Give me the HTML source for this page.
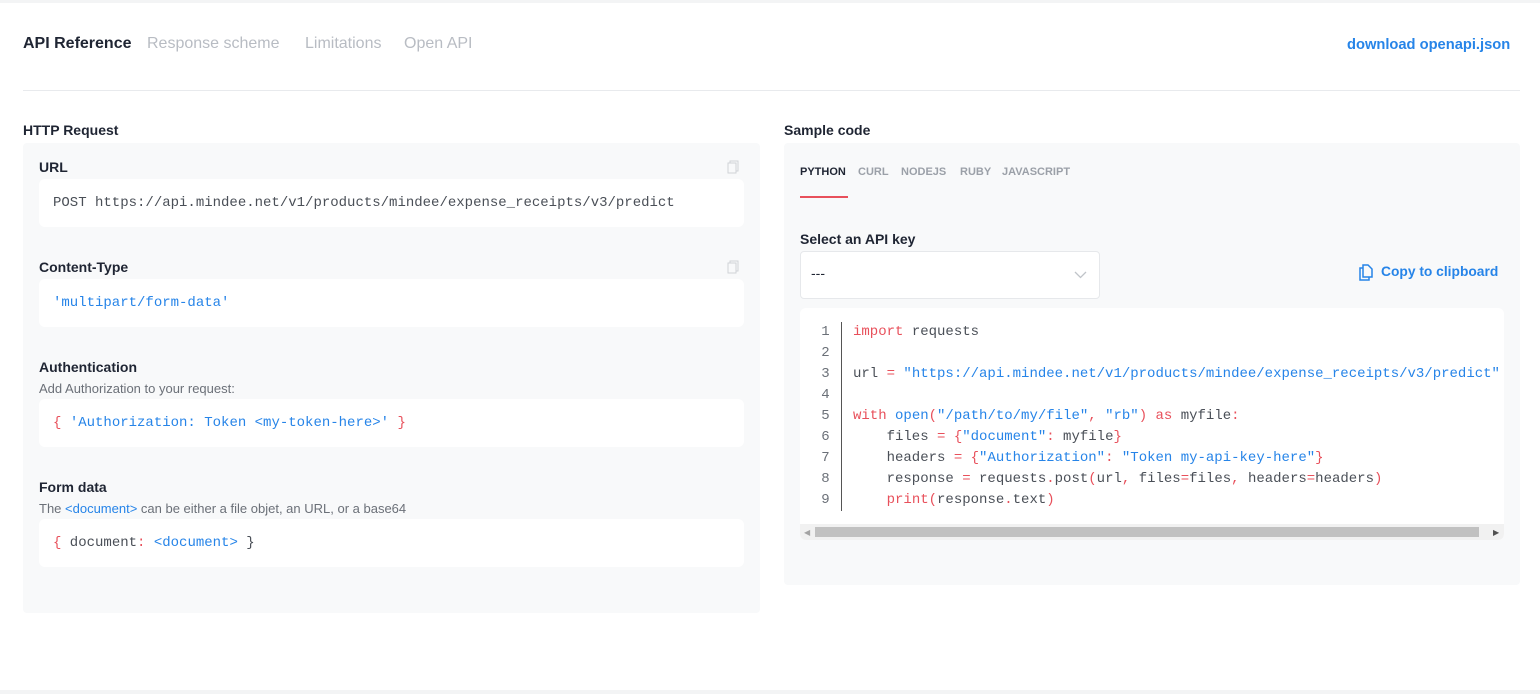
<!DOCTYPE html>
<html><head><meta charset="utf-8"><style>
*{box-sizing:border-box;margin:0;padding:0}
body{width:1540px;height:694px;background:#fff;font-family:"Liberation Sans",sans-serif;position:relative;overflow:hidden;color:#1f2533}
.topbar{position:absolute;left:0;top:0;width:1540px;height:3px;background:#f3f4f5}
.botbar{position:absolute;left:0;bottom:0;width:1540px;height:4px;background:#f3f4f5}
.a{position:absolute;white-space:nowrap}
.nav{top:35px;font-size:16px;color:#b8bcc3}
.hr{position:absolute;left:23px;top:90px;width:1497px;height:1px;background:#e8eaed}
.panel{position:absolute;background:#f8f9fa;border-radius:4px}
.h{font-size:14px;font-weight:bold;color:#1f2533}
.box{position:absolute;background:#fff;border-radius:6px;left:39px;width:705px;height:48px;font-family:"Liberation Mono",monospace;font-size:14px;padding:16px 14px;color:#4a4f57}
.sub{font-size:13px;color:#6b7078}
.b{color:#2684e8}.r{color:#e8505b}.g{color:#4a4f57}
.code{position:absolute;left:800px;top:308px;width:704px;height:232px;background:#fff;border-radius:6px;overflow:hidden}
.ln{position:absolute;left:0;top:14px;width:42px;padding-left:10px;text-align:center;font-family:"Liberation Mono",monospace;font-size:14px;line-height:21px;color:#6b7078;border-right:1px solid #555}
.cl{position:absolute;left:53px;top:14px;font-family:"Liberation Mono",monospace;font-size:14px;line-height:21px;color:#4a4f57;white-space:pre}
.copy{position:absolute;width:12px;height:14px}
</style></head><body>
<div class="topbar"></div>
<div class="a nav" style="left:23px;color:#1f2533;font-weight:bold">API Reference</div>
<div class="a nav" style="left:147px">Response scheme</div>
<div class="a nav" style="left:305px">Limitations</div>
<div class="a nav" style="left:404px">Open API</div>
<div class="a" style="left:1347px;top:37px;font-size:14.7px;font-weight:bold;color:#2684e8">download openapi.json</div>
<div class="hr"></div>

<div class="a h" style="left:23px;top:122px">HTTP Request</div>
<div class="panel" style="left:23px;top:143px;width:737px;height:470px"></div>
<div class="a h" style="left:39px;top:159px">URL</div>
<svg class="copy" style="left:727px;top:160px" viewBox="0 0 12 14"><rect x="3" y="1" width="8" height="10" fill="none" stroke="#d0d3d7"/><rect x="1" y="3" width="8" height="10" fill="#f8f9fa" stroke="#d0d3d7"/></svg>
<div class="box" style="top:179px">POST https://api.mindee.net/v1/products/mindee/expense_receipts/v3/predict</div>
<div class="a h" style="left:39px;top:259px">Content-Type</div>
<svg class="copy" style="left:727px;top:260px" viewBox="0 0 12 14"><rect x="3" y="1" width="8" height="10" fill="none" stroke="#d0d3d7"/><rect x="1" y="3" width="8" height="10" fill="#f8f9fa" stroke="#d0d3d7"/></svg>
<div class="box b" style="top:279px">'multipart/form-data'</div>
<div class="a h" style="left:39px;top:359px">Authentication</div>
<div class="a sub" style="left:39px;top:381px">Add Authorization to your request:</div>
<div class="box" style="top:399px"><span class="r">{</span> <span class="b">'Authorization: Token &lt;my-token-here&gt;'</span> <span class="r">}</span></div>
<div class="a h" style="left:39px;top:479px">Form data</div>
<div class="a sub" style="left:39px;top:501px">The <span class="b">&lt;document&gt;</span> can be either a file objet, an URL, or a base64</div>
<div class="box" style="top:519px"><span class="r">{</span> document<span class="r">:</span> <span class="b">&lt;document&gt;</span> }</div>

<div class="a h" style="left:784px;top:122px">Sample code</div>
<div class="panel" style="left:784px;top:143px;width:736px;height:442px"></div>
<div class="a" style="left:800px;top:166px;font-size:11px;font-weight:bold;color:#1f2533">PYTHON</div>
<div class="a" style="left:858px;top:166px;font-size:11px;font-weight:bold;color:#9ba0a8">CURL</div>
<div class="a" style="left:901px;top:166px;font-size:11px;font-weight:bold;color:#9ba0a8">NODEJS</div>
<div class="a" style="left:960px;top:166px;font-size:11px;font-weight:bold;color:#9ba0a8">RUBY</div>
<div class="a" style="left:1002px;top:166px;font-size:11px;font-weight:bold;color:#9ba0a8">JAVASCRIPT</div>
<div class="a" style="left:800px;top:196px;width:48px;height:2px;background:#e8505b"></div>
<div class="a h" style="left:800px;top:231px">Select an API key</div>
<div class="a" style="left:800px;top:251px;width:300px;height:48px;background:#fff;border:1px solid #e6e8eb;border-radius:4px"></div>
<div class="a" style="left:811px;top:265px;font-size:14px;color:#1f2533">---</div>
<svg class="a" style="left:1074px;top:271px" width="13" height="8" viewBox="0 0 13 8"><path d="M1 1l5.5 5.5L12 1" fill="none" stroke="#c0c4c9" stroke-width="1.3"/></svg>
<svg class="a" style="left:1358px;top:264px" width="16" height="17" viewBox="0 0 16 17"><path d="M5 1h5l4 4v8H5z" fill="none" stroke="#2684e8" stroke-width="1.5"/><path d="M5 4H2v12h9v-3" fill="none" stroke="#2684e8" stroke-width="1.5"/></svg>
<div class="a" style="left:1381px;top:264px;font-size:13.8px;font-weight:bold;color:#2684e8">Copy to clipboard</div>

<div class="code">
<div class="ln">1<br>2<br>3<br>4<br>5<br>6<br>7<br>8<br>9</div>
<div class="cl"><span class="r">import</span> requests

url <span class="r">=</span> <span class="b">"https://api.mindee.net/v1/products/mindee/expense_receipts/v3/predict"</span>

<span class="r">with</span> <span class="b">open</span><span class="r">(</span><span class="b">"/path/to/my/file"</span><span class="r">,</span> <span class="b">"rb"</span><span class="r">)</span> <span class="r">as</span> myfile<span class="r">:</span>
    files <span class="r">=</span> <span class="r">{</span><span class="b">"document"</span><span class="r">:</span> myfile<span class="r">}</span>
    headers <span class="r">=</span> <span class="r">{</span><span class="b">"Authorization"</span><span class="r">:</span> <span class="b">"Token my-api-key-here"</span><span class="r">}</span>
    response <span class="r">=</span> requests<span class="r">.</span>post<span class="r">(</span>url<span class="r">,</span> files<span class="r">=</span>files<span class="r">,</span> headers<span class="r">=</span>headers<span class="r">)</span>
    <span class="r">print(</span>response<span class="r">.</span>text<span class="r">)</span></div>
<div class="a" style="left:0;top:216px;width:704px;height:16px;background:#f1f1f1"></div>
<div class="a" style="left:15px;top:219px;width:664px;height:10px;background:#c1c1c1"></div>
<div class="a" style="left:4px;top:220px;font-size:8px;color:#a3a3a3">◀</div>
<div class="a" style="left:693px;top:220px;font-size:8px;color:#505050">▶</div>
</div>
<div class="botbar"></div>
</body></html>
